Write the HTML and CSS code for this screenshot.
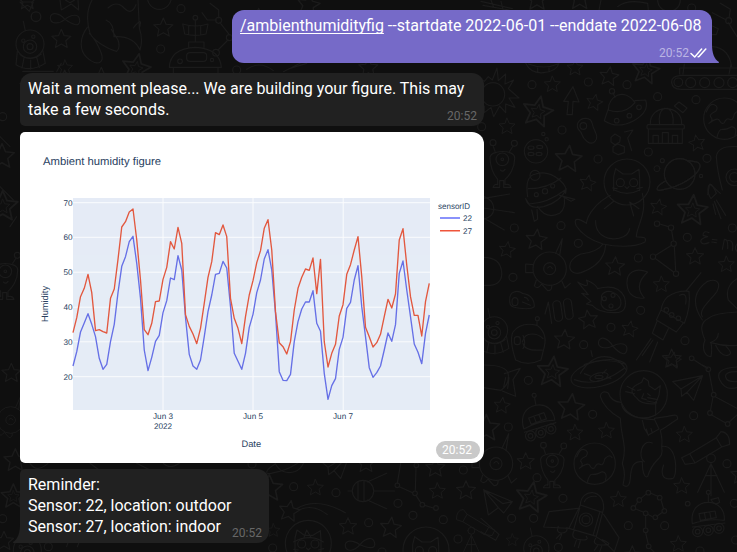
FILE: index.html
```html
<!DOCTYPE html>
<html lang="en">
<head>
<meta charset="utf-8">
<title>Chat</title>
<link rel="stylesheet" href="styles.css">
</head>
<body>
<svg class="wallpaper" viewBox="0 0 737 552" aria-hidden="true">
  <defs>
    <path id="s" d="M0-30 8.2-11.3 28.5-9.3 13.3 4.3 17.6 24.3 0 14-17.6 24.3-13.3 4.3-28.5-9.3-8.2-11.3Z"/>
    <g id="ss"><use href="#s" transform="scale(1.6)"/><use href="#s" transform="scale(.75)"/></g>
    <circle id="o" r="12"/>
    <g id="rover"><path d="M-48 22C-54-20-30-42 0-42S50-20 48 12Q0 6-48 22ZM-48 32 50 20M-28-8-24 12 24 4 20-16ZM-12-11-8 9M4-13 8 7M0-42V-66"/><circle cy="-72" r="6"/><circle cx="-32" cy="46" r="15"/><circle cy="42" r="15"/><circle cx="32" cy="36" r="15"/><circle cx="-32" cy="46" r="7"/><circle cy="42" r="7"/><circle cx="32" cy="36" r="7"/></g>
    <g id="alien"><path d="M-37-10C-38-36 38-36 37-10 38 20 20 44 8 54V70Q22 66 26 78H4V58H-8V78H-28Q-24 66-14 70V54C-26 40-36 18-37-10ZM-22-30-28-48M22-30 32-46M-6 26Q2 34 8 24"/><circle cx="-28" cy="-56" r="9"/><circle cx="36" cy="-54" r="9"/><circle r="19" cy="-6"/><circle r="4" cy="-6"/></g>
    <g id="earth"><circle r="62"/><path d="M-54-20Q-44-48-30-42T-26-22Q-48-12-40-4T-46 14M-46 14Q-20-6-14 6T0 12Q6-4 16 2T30-14Q44-30 52-18M-22 56Q-16 30-6 32T22 24Q40 26 32 50"/></g>
    <g id="plane"><path d="M-45-20 45-38 18 36-2 12-18 24-20 2ZM-20 2 45-38-2 12"/></g>
    <g id="scope"><path d="M-54 4 26-44 42-16-38 32ZM26-44 40-62Q66-60 66-24L42-16M-54 4-78 16-68 36-38 32M10 34-30 120M10 34V130M10 34 50 120M-6 70H28"/><circle cx="10" cy="18" r="13"/></g>
    <g id="robot"><circle r="50"/><circle r="18"/><path d="M-6-2Q2-12 8 0M18-46 38-90 30-40M-50-12-72-14V12H-50M-40 34-46 52Q-36 64-24 46L-6 66Q8 66 6 50M36 36 46 58 62 44"/></g>
    <g id="ufodog"><circle r="42"/><circle r="20" cy="8"/><circle r="9" cy="8"/><circle cx="-20" cy="-10" r="5"/><circle cx="10" cy="-22" r="5"/><path d="M-14-40-20-68M-38 22-42 62Q0 88 46 58L38 18M-30 32Q0 56 34 30M-18 42-24 72M2 48V76M20 40 28 70"/></g>
    <path id="inf" d="M0 0C-20-22-44-22-44-4S-20 16 0 0 44-18 44 4 20 14 0 0Z"/>
    <g id="catface"><circle r="69"/><path d="M-40 26V-16L-34-40-12-24H14L36-38 38-10V26M-38 24Q0 44 38 24M-6 14 0 20 6 14M-30 20-44 18M30 20 46 16"/><circle cx="-20" cy="2" r="12"/><circle cx="20" cy="2" r="12"/></g>
    <g id="planet"><circle r="46"/><path d="M-42 20C-76 40-76 56-46 46 0 38 52 6 60-18 66-38 44-38 24-40"/></g>
  </defs>

  <g class="doodles" transform="scale(.33333)">
    <path d="M60 6H100L88 34ZM180 0 184 30 214 12 236 30 234 0M196 0 210 8 224 0M276 0C262 26 258 60 270 100C280 124 330 150 350 154Q362 144 354 120L334 88M318 60Q342 70 342 110Q400 106 420 150Q430 120 418 84L414 0M400 84Q430 46 418 84M262 82C240 110 236 150 260 172S302 192 306 178 286 116 268 100M324 24Q350 0 372 24T408 14"/>
    <use href="#s" x="82" y="2"/><use href="#o" transform="translate(108 50) scale(1.2)"/><use href="#inf" x="195" y="58"/>
    <use href="#ufodog" x="90" y="132"/><use href="#s" x="184" y="118"/><use href="#s" transform="translate(195 204) scale(.8)"/>
    <use href="#s" x="490" y="84"/><use href="#o" x="482" y="147"/><use href="#o" x="543" y="26"/><circle cx="478" cy="-8" r="36"/>
    <use href="#ss" transform="translate(408 206) rotate(12) scale(.95)"/><use href="#s" x="304" y="232"/>
    <path d="M508 202Q510 146 586 142 660 146 664 202ZM566 142V126H612V142M586 126V60M548 72 554 102Q586 110 618 102L624 72Q586 84 548 72M566 78V104M602 78V104M520 204V230M654 204V230M630 10 656 30V54M606 38 622 60H650M660 68 688 104M684 120 654 150"/>
    <rect x="560" y="158" width="60" height="26" rx="10"/><circle cx="586" cy="53" r="7"/><circle cx="540" cy="184" r="7"/><circle cx="636" cy="180" r="5"/><circle cx="656" cy="61" r="9"/><circle cx="688" cy="113" r="9"/><circle cx="648" cy="158" r="10"/>
    <use href="#s" transform="translate(925 15) rotate(10) scale(1.2)"/><use href="#s" x="776" y="55"/><use href="#o" x="710" y="210"/><path d="M740 208Q780 180 820 212M850 215 900 190M870 205 920 190"/><use href="#s" x="1105" y="204"/>
    <use href="#o" transform="translate(8 350)"/><use href="#s" transform="translate(6 470) scale(1.3)"/><use href="#alien" x="16" y="820"/><use href="#ss" x="8" y="620"/>
    <path d="M60 250Q90 276 150 250M68 214H160M0 410 30 440M0 560 40 600M30 680 50 650M170 215 184 190"/><use href="#s" x="194" y="240"/>
    <use href="#s" x="34" y="1120"/><use href="#robot" transform="translate(32 1260) scale(.8)"/><use href="#s" transform="translate(46 1382) scale(1.2)"/><use href="#o" x="8" y="1556"/><use href="#ss" transform="translate(40 1490) scale(.8)"/><use href="#s" x="12" y="1624"/>
    <use href="#ufodog" x="82" y="1650"/><use href="#o" x="145" y="1640"/><path d="M200 1640 210 1610M232 1640 244 1610M90 1390Q110 1420 144 1390M270 1390 300 1412M410 1390 450 1410M490 1390Q510 1410 540 1388"/>
  </g>

  <g class="doodles" transform="translate(481 0) scale(.33333)">
    <path d="M0 4 94 26M6 16 84 30M30 0 38 22M60 4 66 28M360 0 354 30M410 20Q440 -4 500 10L502 30M694 38 736 60M742 68 768 110M718 10 748 28 744 54M694 78 712 86 706 104H694M134 190Q150 222 188 218T234 190M142 192Q190 210 230 192M170 204V216M204 204V216M694 140Q744 144 752 200M610 192 606 222M750 192 744 222M596 204H768M596 204V222M768 226H600Q570 228 572 248T600 268H768"/>
    <circle cx="564" r="34"/><circle cx="743" cy="62" r="9"/><use href="#o" x="632" y="24"/><use href="#s" transform="translate(168 -2) scale(1.2)"/><use href="#s" transform="translate(296 -4) scale(1.2)"/>
    <circle cx="592" cy="247" r="13"/><circle cx="629" cy="248" r="15"/><circle cx="671" cy="248" r="15"/><circle cx="714" cy="248" r="15"/><circle cx="755" cy="248" r="15"/>
    <circle cx="36" cy="283" r="35"/>
    <path d="M-6 235 10 244 22 230 34 240 48 204 52 242 74 222 72 252 98 240 82 266 114 294 84 294 102 322 74 312 74 338 56 318 38 350 30 322 10 338 10 318"/>
    <use href="#s" transform="translate(282 204) scale(.85)"/><use href="#s" transform="translate(384 230) rotate(8)"/><use href="#s" transform="translate(214 254) scale(.85)"/><use href="#ss" transform="translate(494 212) rotate(10) scale(.9)"/><use href="#ss" transform="translate(170 336) rotate(12)"/><use href="#s" transform="translate(340 308) rotate(12) scale(.85)"/><use href="#s" transform="translate(78 380) scale(.85)"/><use href="#s" transform="translate(262 478) rotate(5) scale(1.4)"/><use href="#s" transform="translate(648 430) rotate(-10) scale(.85)"/><use href="#s" transform="translate(320 550) rotate(10) scale(.85)"/>
    <use href="#o" x="153" y="254"/><use href="#o" x="322" y="246"/><use href="#o" x="438" y="254"/><use href="#o" x="530" y="290"/><use href="#o" x="645" y="299"/><use href="#o" x="243" y="390"/><use href="#o" x="351" y="477"/><use href="#o" x="502" y="456"/><use href="#o" x="678" y="475"/><use href="#o" x="2" y="380"/>
    <path d="M276 260 294 306 276 304 274 344H258L262 304 248 304Z"/>
    <path d="M382 330C380 290 430 260 462 308Q430 346 382 330M382 326 370 362Q410 388 458 362T494 300L462 302M402 292 396 278"/><circle cx="393" cy="274" r="8"/><circle cx="407" cy="362" r="7"/><circle cx="445" cy="347" r="7"/><circle cx="474" cy="322" r="7"/>
    <path d="M508 374C504 310 606 310 602 374M536 374Q530 334 552 324M576 374Q580 334 558 324M502 388V430H604V388M516 430V406H532V430M544 430V398H562V430M574 430V406H590V430M580 318 606 338 618 324 594 306Z"/><rect x="498" y="374" width="112" height="13" rx="4"/>
    <use href="#earth" x="730" y="356"/>
    <path d="M290 370C300 350 330 350 334 372S356 408 342 424 306 416 302 402 284 390 290 370ZM390 412 402 402 418 412 416 426 402 434 390 426ZM396 440 410 432 430 440V458L412 464 396 456ZM430 396 456 390 440 414 452 452"/><circle cx="307" cy="378" r="10"/>
    <circle cx="165" cy="454" r="35"/><circle cx="187" cy="402" r="5"/><circle cx="197" cy="418" r="5"/><ellipse cx="150" cy="443" rx="9" ry="5"/><ellipse cx="176" cy="441" rx="9" ry="5"/><ellipse cx="150" cy="462" rx="9" ry="5"/><ellipse cx="174" cy="462" rx="9" ry="5"/>
    <use href="#alien" x="64" y="484"/>
    <use href="#planet" x="596" y="522"/><use href="#o" transform="translate(528 506) scale(.75)"/><circle cx="544" cy="482" r="6"/><circle cx="660" cy="528" r="5"/>
    <path d="M768 440Q710 436 706 470 708 510 724 570M680 584 686 552 718 580"/><circle cx="760" cy="532" r="25"/><circle cx="760" cy="532" r="14"/>
  </g>

  <g class="doodles" transform="translate(481 180) scale(.33333)">
    <path d="M140 50Q130-12 164-18 200-30 236 0 260 20 254 40M142 26Q200 26 240-6M134 56Q142 90 188 80 240 64 256 26M134 56 144 72Q200 70 252 30M170 80Q196 120 236 100 254 86 250 56M236 46 282 58 270 64 246 50M152 90 160 124 170 118 168 88"/><circle cx="166" cy="44" r="6"/><circle cx="192" cy="34" r="8"/><circle cx="215" cy="18" r="6"/><circle cx="162" cy="-14" r="15"/>
    <path d="M8 55 86 42M8 84 100 98M8 114 70 150M10 50Q36 60 38 84T8 118"/>
    <use href="#catface" x="438" y="6"/>
    <path d="M388 46C350 66 320 100 316 130 290 112 276 114 286 138 304 166 340 184 366 192 400 200 460 204 492 186 500 166 474 174 466 170 466 140 500 100 484 40M344 122C340 190 440 190 446 146M366 192Q350 216 300 222C250 240 260 290 300 278 350 260 372 230 374 194M398 64 370 86M446 66 458 108M446 66 474 86"/>
    <use href="#planet" x="596" y="-18"/>
    <use href="#s" transform="translate(532 82) rotate(10) scale(.85)"/><use href="#ss" transform="translate(634 92) rotate(5)"/>
    <path d="M682 20Q690 0 706 40L690 56Q678 40 682 20M700 64 720 116M706 60 734 106M696 72 704 104"/>
    <use href="#o" x="100" y="144"/><use href="#o" x="240" y="137"/><use href="#o" x="292" y="190"/><use href="#o" x="472" y="234"/><use href="#o" x="619" y="172"/><use href="#o" x="754" y="144"/><use href="#o" x="96" y="292"/><use href="#o" x="479" y="391"/><use href="#o" x="390" y="442"/><use href="#o" x="308" y="494"/><use href="#o" x="612" y="482"/>
    <use href="#s" transform="translate(166 180) rotate(6) scale(1.1)"/><use href="#s" transform="translate(78 210) rotate(8) scale(.85)"/><use href="#s" transform="translate(402 260) rotate(3)"/><use href="#s" transform="translate(642 230) scale(.9)"/><use href="#s" transform="translate(736 254) scale(.85)"/><use href="#s" transform="translate(541 314) scale(.85)"/><use href="#s" transform="translate(322 420) rotate(-8)"/><use href="#s" transform="translate(446 448) rotate(10) scale(.85)"/><use href="#s" transform="translate(250 480) rotate(4) scale(1.05)"/><use href="#s" transform="translate(576 542) rotate(8) scale(.85)"/>
    <path d="M536 132 562 140M572 152 577 182M572 196 524 226M580 198 584 272M524 236 578 276"/><circle cx="528" cy="131" r="8"/><circle cx="570" cy="143" r="8"/><circle cx="578" cy="191" r="8"/><circle cx="516" cy="230" r="8"/><circle cx="585" cy="281" r="8"/>
    <path d="M684 158Q666 150 666 166L680 170Q656 176 660 186T684 188M694 178 708 180M692 186 706 188M724 208 730 178Q742 176 740 206M740 182Q760 178 754 212M768 192Q758 204 768 214"/>
    <use href="#robot" x="206" y="266"/>
    <path d="M8 232Q58 232 62 276T8 316M500 276C460 260 436 280 438 312S462 358 490 354Q456 316 500 276Z"/>
    <path d="M290 306Q330 330 316 300 344 312 350 326 410 310 430 350 444 400 400 398 352 398 334 376L316 372 330 364 302 340 322 344ZM362 346C380 320 422 344 420 370S370 400 360 372Z"/><circle cx="396" cy="346" r="6"/><circle cx="370" cy="356" r="6"/><circle cx="390" cy="378" r="6"/>
    <path d="M86 362C84 332 110 330 124 340 150 344 160 360 160 380 150 390 124 386 110 384S86 380 86 362M130 352Q140 352 142 362M124 366 148 376M192 402 202 366 212 430"/><ellipse cx="102" cy="365" rx="9" ry="12"/><rect x="218" y="362" width="24" height="62" rx="12" transform="rotate(-8 230 393)"/><rect x="250" y="356" width="24" height="62" rx="12" transform="rotate(-8 262 387)"/>
    <path d="M660 278 616 332M560 350Q590 330 624 334 630 380 610 430L540 390Q544 366 560 350M596 346Q620 334 614 372M540 390 526 420 586 456 606 430M528 424 514 460 546 480 562 446M510 476 466 540M516 480 484 526M530 486 506 546"/><circle cx="556" cy="390" r="7"/><circle cx="572" cy="405" r="7"/><circle cx="592" cy="415" r="7"/>
    <path d="M768 396Q700 400 684 414C650 430 664 460 672 480 660 510 674 530 690 530Q694 510 690 488 730 500 768 496M664 420C630 370 640 330 680 304 710 294 720 310 708 334 690 360 650 390 664 410M704 496Q720 530 740 526T732 496M688 488Q712 480 712 460M768 296Q730 320 742 360L768 386"/>
    <use href="#ufodog" transform="translate(40 450) scale(.95)"/>
    <path d="M104 540Q84 480 96 456 120 424 168 436 200 460 190 500L180 540Q140 560 104 540M168 436V424M124 486Q130 462 152 462T186 476M126 490Q130 514 184 510M126 466Q136 490 126 506"/><circle cx="169" cy="416" r="6"/><rect x="100" y="470" width="18" height="24" rx="8"/>
    <use href="#inf" transform="translate(395 498) rotate(12)"/><path d="M298 580Q330 530 370 530T436 570M334 530 330 512M310 554Q370 530 432 552M636 538 680 566"/><circle cx="632" cy="535" r="7"/>
  </g>

  <g class="doodles" transform="translate(481 365) scale(.33333)">
    <path d="M8 0Q80 0 82 30T60 76L8 68M70 26 118 10 96 44 104 94 64 78M74 38 68 66M84 38 80 70"/>
    <use href="#ss" transform="translate(214 22) rotate(6)"/><use href="#o" x="142" y="46"/><ellipse cx="354" cy="26" rx="86" ry="38" transform="rotate(-14 354 26)"/><ellipse cx="354" cy="36" rx="28" ry="12" transform="rotate(-14 354 36)"/><ellipse cx="354" cy="36" rx="12" ry="5"/><path d="M280 44Q350 70 430 10M310 26 330 34M376 14 364 26M390 40 376 36"/>
    <circle cx="488" cy="88" r="71"/><path d="M466 60 482 52 488 38 502 48 504 62 522 74 538 62 534 90 524 116Q480 120 466 98 440 76 466 60M438 64 462 76M434 80 460 86M500 98 530 104M498 108 528 114M470 76 480 74M500 86 508 92M488 86 482 100 496 104M430 132Q470 176 524 150V110M422 118Q430 160 520 164"/>
    <path d="M420 112Q390 110 382 84 360 74 358 94 368 130 418 160C420 220 440 240 424 296 434 320 430 340 426 360 440 370 446 360 448 340 450 300 460 288 484 290 484 330 494 340 500 334 520 270 550 290 542 244 546 220 538 200 538 196 560 184 570 174 590 162 590 146 580 150 560 154L520 160M484 166 490 190 502 210 534 192 520 162M496 192 502 212M510 190 514 204M544 244C590 240 590 330 576 340 540 348 540 320 548 300M514 234C480 220 470 280 490 290"/>
    <use href="#plane" x="620" y="70"/><path d="M664 0 680 8M684 20 696 82M696 96 688 138M692 150 734 174M746 170 768 150M704 96 768 130"/><circle cx="682" cy="13" r="7"/><circle cx="698" cy="89" r="7"/><circle cx="687" cy="144" r="7"/><circle cx="740" cy="177" r="7"/><path d="M768 6Q700 10 716 44T768 68M768 20Q730 20 734 36T768 50"/>
    <use href="#rover" transform="translate(172 162) rotate(-10)"/><use href="#s" transform="translate(63 122) rotate(6) scale(.85)"/><use href="#s" transform="translate(270 128) rotate(6) scale(1.4)"/><use href="#s" transform="translate(16 190) scale(1.4)"/><use href="#s" transform="translate(282 204) scale(.85)"/><use href="#s" transform="translate(376 198) scale(.85)"/><use href="#s" transform="translate(610 210) scale(.85)"/><use href="#s" transform="translate(134 290) scale(.9)"/><use href="#s" transform="translate(602 364) scale(.85)"/><use href="#s" transform="translate(412 404) scale(.85)"/><use href="#s" transform="translate(94 526) scale(.65)"/><use href="#s" transform="translate(592 538) scale(.85)"/><use href="#s" x="454" y="572"/><use href="#ss" transform="translate(150 398) rotate(10)"/><use href="#s" x="572" y="-18"/><use href="#s" x="778" y="330"/>
    <use href="#o" x="82" y="186"/><use href="#o" x="335" y="148"/><use href="#o" x="638" y="152"/><use href="#o" x="738" y="296"/><use href="#o" x="168" y="338"/><use href="#o" x="246" y="400"/><use href="#o" x="92" y="460"/><use href="#o" x="158" y="460"/><use href="#o" x="442" y="482"/><use href="#o" x="551" y="482"/><use href="#o" x="232" y="547"/><use href="#o" x="760" y="415"/><use href="#o" x="657" y="558"/><use href="#o" x="764" y="525"/>
    <use href="#robot" transform="translate(45 296)"/><use href="#alien" transform="translate(214 294) scale(.95)"/><use href="#earth" x="341" y="296"/><use href="#scope" x="680" y="262"/>
    <path d="M8 374 94 410 68 444 52 428 22 450ZM8 374 52 428M8 374 66 416 94 410"/>
    <path d="M298 420C300 368 370 370 368 430L346 514 264 490ZM310 410Q318 392 346 394M298 420 364 442M296 430 278 494M356 442 336 512M290 430 204 440 188 486 264 490M368 448 414 518 400 560Q370 528 346 516M232 484Q224 504 242 504T258 488M280 496Q266 520 296 524T316 514M344 520Q330 540 366 540T364 524M240 506 226 520M242 508 236 524M286 526 280 544M298 528 292 548M350 542 340 556M362 544 356 560"/><circle cx="315" cy="464" r="20"/><circle cx="315" cy="464" r="12"/>
    <path d="M462 424 470 410M480 400 494 388M508 384 530 394M540 404 548 432M544 442 528 454M516 456 500 448M488 442 464 432M494 454V488M494 504 502 538M508 550 520 562"/><circle cx="457" cy="429" r="7"/><circle cx="475" cy="405" r="7"/><circle cx="502" cy="383" r="7"/><circle cx="536" cy="398" r="7"/><circle cx="550" cy="438" r="7"/><circle cx="523" cy="457" r="7"/><circle cx="494" cy="445" r="7"/><circle cx="494" cy="496" r="7"/><circle cx="503" cy="544" r="7"/>
    <use href="#rover" x="682" y="454"/><path d="M0 460 54 508 44 526 0 500M690 404 712 398 716 412Q700 424 690 404"/><circle cx="620" cy="416" r="7"/><use href="#ufodog" transform="translate(166 550) scale(.9)"/>
  </g>

  <g class="doodles" transform="translate(230 380) scale(.33333)">
    <use href="#s" transform="translate(118 326) scale(1.4)"/><use href="#s" transform="translate(256 324) scale(.85)"/><use href="#s" transform="translate(178 394) rotate(10) scale(1.1)"/><use href="#s" transform="translate(354 440) scale(.9)"/><use href="#s" transform="translate(482 444) rotate(6) scale(1.1)"/><use href="#s" transform="translate(622 334) scale(.85)"/><use href="#s" transform="translate(708 332)"/><use href="#s" transform="translate(616 264)"/><use href="#s" transform="translate(408 250)"/><use href="#s" transform="translate(130 452) scale(.7)"/>
    <use href="#o" x="191" y="320"/><use href="#o" x="318" y="338"/><use href="#o" x="504" y="370"/><use href="#o" x="549" y="406"/><use href="#o" x="416" y="428"/><use href="#o" x="640" y="419"/><use href="#o" x="684" y="477"/><use href="#o" x="700" y="270"/><use href="#o" x="128" y="504"/><use href="#o" x="456" y="516"/><use href="#o" x="66" y="252"/>
    <use href="#planet" x="178" y="232"/><use href="#plane" transform="translate(314 260)"/>
    <circle cx="399" cy="333" r="32"/><path d="M384 304V362M402 302V364M354 333H368M412 306 470 280M432 333H494M412 360 470 386M200 386Q260 350 346 398M206 390Q250 370 292 404"/>
    <path d="M512 250 502 310M508 320 548 338M558 262 556 332M558 346 572 368M584 376 610 384"/><circle cx="502" cy="316" r="7"/><circle cx="555" cy="340" r="7"/><circle cx="577" cy="374" r="7"/><circle cx="618" cy="384" r="7"/><circle cx="559" cy="256" r="7"/>
    <use href="#catface" x="235" y="490"/><path d="M190 486Q240 460 280 486M222 472 230 450 244 474"/><use href="#catface" x="588" y="510"/><use href="#inf" transform="translate(390 494) rotate(-12)"/><use href="#scope" transform="translate(732 438) scale(-.8 .8)"/>
  </g>
</svg>

<main class="chat">
  <article class="bubble bubble-out">
    <p><a class="command">/ambienthumidityfig</a> --startdate 2022-06-01 --enddate 2022-06-08</p>
    <div class="meta"><time>20:52</time><svg class="checks" viewBox="0 0 17 10"><path d="M1 5.5 4.7 9 11.6 1M8.2 8.8 9 8.6 15.8 1"/></svg></div>
    <svg class="tail tail-out" viewBox="0 0 8 19"><path d="M0 0C0 9 2 15 7 18Q7.4 19 6 19H0Z"/></svg>
  </article>

  <article class="bubble bubble-wait">
    <p>Wait a moment please... We are building your figure. This may<br>take a few seconds.</p>
    <time class="stamp">20:52</time>
  </article>

  <article class="photo">
    <svg class="chart" viewBox="0 0 464 331" role="img" aria-label="Ambient humidity figure">
      <rect class="plot-bg" x="53" y="66" width="357" height="212"/>
      <path class="grid" d="M53 70.7H410M53 105.3H410M53 140.2H410M53 175.2H410M53 209.8H410M53 244.7H410M143 66V278M233 66V278M323.2 66V278"/>
      <g class="series" transform="translate(53 58) scale(3.75 .33333)">
        <polyline class="s22" points="0,528 1,485 2,426 3,399 4,371 5,403 6,440 7,505 8,538 9,523 10,455 11,403 12,308 13,229 14,200 15,155 16,139 17,220 18,325 19,480 20,542 21,502 22,454 23,436 24,368 25,332 26,264 27,269 28,197 29,240 30,382 31,493 32,528 33,538 34,510 35,440 36,365 37,315 38,253 39,250 40,214 41,234 42,350 43,490 44,514 45,538 46,490 47,412 48,373 49,308 50,270 51,207 52,179 53,240 54,370 55,545 56,571 57,572 58,553 59,455 60,395 61,357 62,336 63,336 64,302 65,400 66,424 67,550 68,628 69,587 70,566 71,478 72,442 73,355 74,337 75,270 76,227 77,350 78,440 79,533 80,562 81,548 82,528 83,480 84,429 85,454 86,404 87,250 88,213 89,300 90,380 91,462 92,487 93,521 94,430 95,375"/>
        <polyline class="s27" points="0,428 1,383 2,320 3,295 4,253 5,308 6,422 7,419 8,425 9,429 10,325 11,297 12,208 13,111 14,95 15,66 16,57 17,150 18,270 19,419 20,434 21,400 22,335 23,333 24,268 25,232 26,155 27,177 28,112 29,160 30,374 31,409 32,432 33,461 34,415 35,340 36,262 37,215 38,128 39,134 40,105 41,140 42,325 43,385 44,415 45,461 46,380 47,315 48,272 49,218 50,182 51,115 52,89 53,180 54,365 55,458 56,470 57,492 58,455 59,360 60,295 61,262 62,237 63,241 64,204 65,311 66,208 67,455 68,531 69,490 70,463 71,378 72,344 73,253 74,224 75,180 76,140 77,260 78,412 79,440 80,471 81,458 82,433 83,380 84,328 85,354 86,312 87,150 88,116 89,225 90,320 91,376 92,376 93,438 94,335 95,280"/>
      </g>
      <text class="title" x="23" y="33" textLength="118" lengthAdjust="spacingAndGlyphs">Ambient humidity figure</text>
      <g class="ticks end"><text x="52.5" y="73.7">70</text><text x="52.5" y="108.3">60</text><text x="52.5" y="143.2">50</text><text x="52.5" y="178.2">40</text><text x="52.5" y="212.8">30</text><text x="52.5" y="247.7">20</text></g>
      <g class="ticks mid"><text x="143" y="286.6">Jun 3</text><text x="143" y="297.2">2022</text><text x="233" y="286.6">Jun 5</text><text x="323" y="286.6">Jun 7</text></g>
      <text class="axis" x="231.3" y="315">Date</text>
      <text class="axis" transform="translate(27.5 172) rotate(-90)">Humidity</text>
      <text class="legend-title" x="418" y="77" textLength="32" lengthAdjust="spacingAndGlyphs">sensorID</text>
      <path class="s22 key" d="M420 86H440"/><path class="s27 key" d="M420 98.7H440"/>
      <g class="ticks"><text x="443" y="89.3">22</text><text x="443" y="102">27</text></g>
    </svg>
    <time class="photo-time">20:52</time>
  </article>

  <article class="bubble bubble-reminder">
    <p>Reminder:<br>Sensor: 22, location: outdoor<br>Sensor: 27, location: indoor</p>
    <time class="stamp">20:52</time>
    <svg class="tail tail-in" viewBox="0 0 8 19"><path d="M8 0C8 9 6 15 1 18Q.6 19 2 19H8Z"/></svg>
  </article>
</main>
</body>
</html>
```
FILE: styles.css
```css
* { box-sizing: border-box; }
body {
  margin: 0;
  height: 552px;
  overflow: hidden;
  position: relative;
  background: #0f0f0f;
  font: 16px/21px Roboto, sans-serif;
  color: #fff;
}
p { margin: 0; white-space: nowrap; }
.wallpaper { position: absolute; inset: 0; width: 737px; height: 552px; }
.doodles { fill: none; stroke: #1b1b1b; stroke-width: 3.5; stroke-linejoin: round; stroke-linecap: round; }

.chat {
  position: relative;
  display: flex;
  flex-direction: column;
  align-items: flex-start;
  gap: 6px;
  padding: 10px 25px 0 20px;
}
.bubble { position: relative; padding: 5px 8px; background: #212121; }
.bubble-out {
  align-self: flex-end;
  width: 480px;
  height: 53px;
  margin-bottom: 4px;
  background: #766ac8;
  border-radius: 12px 12px 0 12px;
}
.command { text-decoration: underline; text-underline-offset: 2px; text-decoration-thickness: 1px; text-decoration-skip-ink: none; }
.meta { display: flex; justify-content: flex-end; align-items: center; margin: 7px -3px 0 0; font-size: 12px; line-height: 20px; color: #bbb5e4; }
.checks { width: 17px; height: 10px; margin-left: 1px; }
.checks path { fill: none; stroke: #fff; stroke-width: 1.5; stroke-linecap: round; stroke-linejoin: round; }
.bubble-wait { width: 464px; height: 53px; border-radius: 12px 12px 12px 5px; }
.stamp { position: absolute; right: 7px; bottom: 1px; font-size: 12px; line-height: 18px; color: #686868; }
.bubble-reminder { width: 249px; height: 74px; border-radius: 5px 12px 12px 0; }
.tail { position: absolute; bottom: 0; width: 8px; height: 19px; }
.tail-out { left: 100%; fill: #766ac8; }
.tail-in { right: 100%; fill: #212121; }

.photo { position: relative; width: 464px; height: 331px; overflow: hidden; background: #fff; border-radius: 5px 12px 12px 5px; }
.chart { display: block; width: 464px; height: 331px; font-family: "Liberation Sans", sans-serif; fill: #2a3f5f; text-rendering: geometricPrecision; }
.plot-bg { fill: #e5ecf6; }
.grid { stroke: #fff; stroke-width: 1; opacity: .85; }
.series polyline { fill: none; stroke-width: 1.35; stroke-linejoin: round; vector-effect: non-scaling-stroke; }
.s22 { stroke: #636efa; }
.s27 { stroke: #ef553b; }
.series .s22 { stroke: #6670e6; }
.series .s27 { stroke: #e2583f; }
.key { stroke-width: 1.4; }
.title { font-size: 11.2px; }
.ticks { font-size: 8.2px; }
.end { text-anchor: end; }
.mid { text-anchor: middle; }
.axis { font-size: 9.3px; text-anchor: middle; }
.legend-title { font-size: 8.2px; }
.photo-time { position: absolute; right: 4px; bottom: 4px; width: 44px; height: 18px; border-radius: 9px; background: #c9c9c9; font-size: 12px; line-height: 19px; text-align: center; padding-right: 2px; }
```
